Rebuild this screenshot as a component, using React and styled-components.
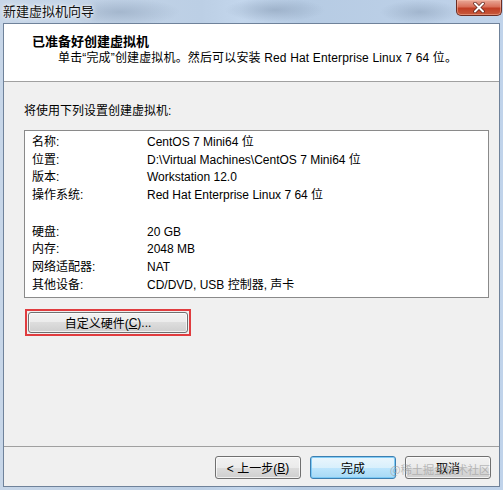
import React from "react";
import styled, { createGlobalStyle } from "styled-components";

const Global = createGlobalStyle`
  html, body { margin: 0; padding: 0; background: #fff; }
  body { font-family: "Liberation Sans", "Noto Sans CJK SC", sans-serif; font-size: 12px; color: #000; }
  * { box-sizing: border-box; }
`;

const Window = styled.div`
  position: relative;
  width: 503px;
  height: 490px;
  display: flex;
  flex-direction: column;
  padding: 0 3px 3px 3px;
  background:
    radial-gradient(ellipse 60px 14px at 120px 12px, rgba(130,150,175,0.45), transparent),
    radial-gradient(ellipse 50px 12px at 275px 10px, rgba(130,150,175,0.5), transparent),
    radial-gradient(ellipse 40px 12px at 420px 12px, rgba(130,150,175,0.45), transparent),
    linear-gradient(90deg, #c7d6e8 0%, #bccfe5 40%, #c3d6ec 48%, #b6cbe3 60%, #c0d3ea 100%);
`;

const TitleBar = styled.div`
  height: 23px;
  display: flex;
  align-items: flex-start;
  justify-content: space-between;
`;

const Title = styled.div`
  padding-top: 3px;
  font-family: "Noto Sans CJK SC", sans-serif;
  font-size: 13px;
  line-height: 16px;
  color: #111;
  text-shadow: 0 0 6px rgba(255,255,255,0.95), 0 0 3px rgba(255,255,255,0.9);
`;

const CloseButton = styled.div`
  width: 46px;
  height: 16px;
  margin-right: -2px;
  display: flex;
  align-items: center;
  justify-content: center;
  border: 1px solid #6b2d23;
  border-top: none;
  border-radius: 0 0 5px 5px;
  background: linear-gradient(180deg, #e9a898 0%, #d9705a 45%, #c13e25 55%, #c75a3c 100%);
  box-shadow: inset 0 0 0 1px rgba(255,200,180,0.45);
`;

const Client = styled.div`
  flex: 1;
  display: flex;
  flex-direction: column;
  border: 1px solid #6f829a;
  background: #f0f0f0;
`;

const Header = styled.div`
  height: 58px;
  background: #fff;
  border-bottom: 1px solid #a0a0a0;
  padding: 8px 0 0 28px;
  font-family: "Noto Sans CJK SC", sans-serif;
`;

const HeaderTitle = styled.div`
  font-size: 13px;
  font-weight: bold;
  line-height: 18px;
`;

const HeaderSub = styled.div`
  margin-left: 26px;
  font-size: 12px;
  line-height: 16px;
  font-family: "Liberation Sans", "Noto Sans CJK SC", sans-serif;
  letter-spacing: 0.15px;
`;

const Body = styled.div`
  flex: 1;
  padding: 21px 0 0 20px;
  display: flex;
  flex-direction: column;
  align-items: flex-start;
`;

const Intro = styled.div`
  line-height: 16px;
`;

const ListBox = styled.div`
  margin-top: 11px;
  width: 465px;
  height: 168px;
  border: 1px solid #8a8a8a;
  background: #fff;
  padding: 3px 0 0 7px;
`;

const Group = styled.div`
  & + & { margin-top: 19px; }
`;

const Row = styled.div`
  display: grid;
  grid-template-columns: 115px 1fr;
  height: 17.67px;
  line-height: 17.67px;
  white-space: nowrap;
`;

const HighlightFrame = styled.div`
  margin-top: 11px;
  margin-left: 1px;
  padding: 1px;
  border: 2px solid #e03c3f;
`;

const Button = styled.div`
  width: ${p => p.$w || 86}px;
  height: ${p => p.$h || 23}px;
  display: flex;
  align-items: center;
  justify-content: center;
  border: 1px solid ${p => (p.$primary ? "#3c7fb1" : "#707070")};
  border-radius: 3px;
  font-size: 12px;
  background: ${p =>
    p.$primary
      ? "linear-gradient(180deg, #eaf6fd 0%, #d9f0fc 50%, #bee6fd 50%, #a7d9f5 100%)"
      : "linear-gradient(180deg, #f2f2f2 0%, #ebebeb 50%, #dddddd 50%, #cfcfcf 100%)"};
  box-shadow: inset 0 0 0 1px ${p => (p.$primary ? "rgba(120,200,245,0.9)" : "rgba(255,255,255,0.7)")};
`;

const Footer = styled.div`
  height: 40px;
  border-top: 1px solid #a0a0a0;
  display: flex;
  justify-content: flex-end;
  align-items: flex-start;
  padding: 9px 8px 0 0;
  gap: 9px;
  position: relative;
`;

const U = styled.span`
  text-decoration: underline;
`;

const Watermark = styled.div`
  position: absolute;
  right: 9px;
  top: 15px;
  font-family: "Noto Sans CJK SC", sans-serif;
  font-size: 11.5px;
  line-height: 14px;
  color: rgba(160,160,160,0.7);
  pointer-events: none;
  letter-spacing: -0.3px;
`;

const settingsA = [
  ["名称:", "CentOS 7 Mini64 位"],
  ["位置:", "D:\\Virtual Machines\\CentOS 7 Mini64 位"],
  ["版本:", "Workstation 12.0"],
  ["操作系统:", "Red Hat Enterprise Linux 7 64 位"],
];
const settingsB = [
  ["硬盘:", "20 GB"],
  ["内存:", "2048 MB"],
  ["网络适配器:", "NAT"],
  ["其他设备:", "CD/DVD, USB 控制器, 声卡"],
];

export default function App() {
  return (
    <>
      <Global />
      <Window>
        <TitleBar>
          <Title>新建虚拟机向导</Title>
          <CloseButton>
            <svg width="14" height="11" viewBox="0 0 14 11">
              <path d="M3 1.5 L11 9.5 M11 1.5 L3 9.5" stroke="#5a2018" strokeWidth="3.4" strokeLinecap="round" />
              <path d="M3 1.5 L11 9.5 M11 1.5 L3 9.5" stroke="#fff" strokeWidth="2" strokeLinecap="round" />
            </svg>
          </CloseButton>
        </TitleBar>
        <Client>
          <Header>
            <HeaderTitle>已准备好创建虚拟机</HeaderTitle>
            <HeaderSub>单击“完成”创建虚拟机。然后可以安装 Red Hat Enterprise Linux 7 64 位。</HeaderSub>
          </Header>
          <Body>
            <Intro>将使用下列设置创建虚拟机:</Intro>
            <ListBox>
              <Group>
                {settingsA.map(([k, v]) => (
                  <Row key={k}><span>{k}</span><span>{v}</span></Row>
                ))}
              </Group>
              <Group>
                {settingsB.map(([k, v]) => (
                  <Row key={k}><span>{k}</span><span>{v}</span></Row>
                ))}
              </Group>
            </ListBox>
            <HighlightFrame>
              <Button $w={160} $h={21}>自定义硬件(<U>C</U>)...</Button>
            </HighlightFrame>
          </Body>
          <Footer>
            <Button>&lt; 上一步(<U>B</U>)</Button>
            <Button $primary>完成</Button>
            <Button>取消</Button>
            <Watermark>@稀土掘金技术社区</Watermark>
          </Footer>
        </Client>
      </Window>
    </>
  );
}
